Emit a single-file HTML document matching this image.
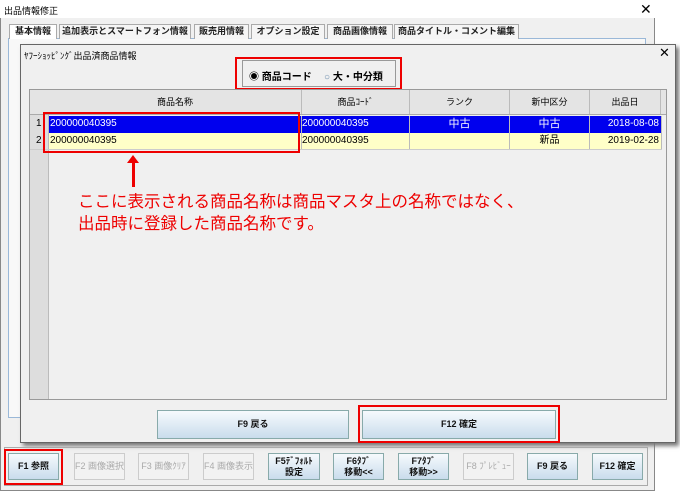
<!DOCTYPE html>
<html><head><meta charset="utf-8"><style>
*{box-sizing:border-box;margin:0;padding:0}
body{width:680px;height:492px;background:#fff;position:relative;overflow:hidden;font-family:"Liberation Sans","Noto Sans CJK JP",sans-serif;font-size:10px;color:#000}
.a{position:absolute}
.win{left:0;top:0;width:655px;height:491px;background:#f0f0f0;border:1px solid #888}
.tb{left:0;top:0;width:655px;height:18px;background:#fff}
.tab{top:24px;height:15px;border:1px solid #aaa;border-bottom:none;background:#f5f5f5;font-size:9px;line-height:13px;text-align:center;font-weight:bold;color:#222;white-space:nowrap;overflow:hidden}
.panel{left:8px;top:38px;width:638px;height:380px;border:1px solid #9ab8d8;background:#f8f8f8}
.dlg{left:20px;top:44px;width:656px;height:399px;background:#f0f0f0;border:1px solid #666;box-shadow:3px 3px 4px #777}
.btn{background:linear-gradient(#f6fafd,#c9dcec);border:1px solid #8aa;font-size:9px;font-weight:bold;text-align:center;color:#111;white-space:nowrap}
.dis{background:#f2f2f2;border:1px solid #ccc;color:#aaa;font-weight:normal}
.red{border:2px solid #e00}
.cell{position:absolute;height:100%;border-right:1px solid #bbb;line-height:16px;font-size:10px}
</style></head><body>
<div class="a win"></div>
<div class="a tb"></div>
<div class="a" style="left:4px;top:4px;font-size:9px">出品情報修正</div>
<div class="a" style="left:640px;top:1px;font-size:14px">✕</div>
<div class="a panel"></div>
<div class="a tab" style="left:9px;width:48px;background:#fff">基本情報</div>
<div class="a tab" style="left:59px;width:132px">追加表示とスマートフォン情報</div>
<div class="a tab" style="left:194px;width:55px">販売用情報</div>
<div class="a tab" style="left:251px;width:74px">オプション設定</div>
<div class="a tab" style="left:327px;width:66px">商品画像情報</div>
<div class="a tab" style="left:394px;width:125px">商品タイトル・コメント編集</div>

<div class="a dlg"></div>
<div class="a" style="left:24px;top:49px;font-size:9px">ﾔﾌｰｼｮｯﾋﾟﾝｸﾞ出品済商品情報</div>
<div class="a" style="left:659px;top:45px;font-size:13px">✕</div>
<div class="a" style="left:242px;top:60px;width:154px;height:27px;border:1px solid #999;background:#f0f0f0"></div>
<div class="a" style="left:249px;top:68px;font-size:10px;font-weight:bold">◉ 商品コード</div>
<div class="a" style="left:324px;top:68px;font-size:10px;font-weight:bold"><span style="color:#68a">○</span> 大・中分類</div>
<div class="a red" style="left:235px;top:57px;width:167px;height:33px"></div>

<div class="a" style="left:29px;top:89px;width:638px;height:311px;border:1px solid #999;background:#f0f0f0"></div>
<div class="a" style="left:30px;top:90px;width:19px;height:309px;background:#ddd;border-right:1px solid #bbb"></div>
<div class="a" style="left:30px;top:90px;width:636px;height:25px;background:#e4e4e4;border-bottom:1px solid #aaa">
<div class="cell" style="left:19px;width:253px;text-align:center;line-height:25px;font-size:9px">商品名称</div>
<div class="cell" style="left:272px;width:108px;text-align:center;line-height:25px;font-size:9px">商品ｺｰﾄﾞ</div>
<div class="cell" style="left:380px;width:100px;text-align:center;line-height:25px;font-size:9px">ランク</div>
<div class="cell" style="left:480px;width:80px;text-align:center;line-height:25px;font-size:9px">新中区分</div>
<div class="cell" style="left:560px;width:71px;text-align:center;line-height:25px;font-size:9px">出品日</div>
</div>
<div class="a" style="left:30px;top:116px;width:632px;height:17px;background:#0000ee;color:#fff">
<div class="cell" style="left:0;width:19px;background:#ddd;color:#000;padding-left:6px">1</div>
<div class="cell" style="left:19px;width:253px;padding-left:1px">200000040395</div>
<div class="cell" style="left:272px;width:108px">200000040395</div>
<div class="cell" style="left:380px;width:100px;text-align:center;font-size:11px">中古</div>
<div class="cell" style="left:480px;width:80px;text-align:center;font-size:11px">中古</div>
<div class="cell" style="left:560px;width:72px;text-align:right;padding-right:2px">2018-08-08</div>
</div>
<div class="a" style="left:30px;top:133px;width:632px;height:17px;background:#ffffc8;border-bottom:1px solid #ccc">
<div class="cell" style="left:0;width:19px;background:#ddd;padding-left:6px">2</div>
<div class="cell" style="left:19px;width:253px;padding-left:1px">200000040395</div>
<div class="cell" style="left:272px;width:108px">200000040395</div>
<div class="cell" style="left:380px;width:100px"></div>
<div class="cell" style="left:480px;width:80px;text-align:center">新品</div>
<div class="cell" style="left:560px;width:72px;text-align:right;padding-right:2px">2019-02-28</div>
</div>
<div class="a red" style="left:43px;top:112px;width:257px;height:41px"></div>
<div class="a" style="left:132px;top:160px;width:3px;height:27px;background:#e00"></div>
<div class="a" style="left:127px;top:155px;width:0;height:0;border-left:6px solid transparent;border-right:6px solid transparent;border-bottom:8px solid #e00"></div>
<div class="a" style="left:78px;top:191px;color:#e00;font-size:16.5px;line-height:22px">ここに表示される商品名称は商品マスタ上の名称ではなく、<br>出品時に登録した商品名称です。</div>

<div class="a btn" style="left:157px;top:410px;width:192px;height:29px;line-height:27px">F9 戻る</div>
<div class="a btn" style="left:362px;top:410px;width:194px;height:29px;line-height:27px">F12 確定</div>
<div class="a red" style="left:358px;top:405px;width:202px;height:38px"></div>

<div class="a" style="left:4px;top:447px;width:644px;height:39px;border:1px solid #aaa"></div>
<div class="a btn" style="left:8px;top:453px;width:51px;height:27px;line-height:25px">F1 参照</div>
<div class="a btn dis" style="left:74px;top:453px;width:51px;height:27px;line-height:25px">F2 画像選択</div>
<div class="a btn dis" style="left:138px;top:453px;width:51px;height:27px;line-height:25px">F3 画像ｸﾘｱ</div>
<div class="a btn dis" style="left:203px;top:453px;width:51px;height:27px;line-height:25px">F4 画像表示</div>
<div class="a btn" style="left:268px;top:453px;width:52px;height:27px;line-height:11px;padding-top:2px">F5ﾃﾞﾌｫﾙﾄ<br>設定</div>
<div class="a btn" style="left:333px;top:453px;width:51px;height:27px;line-height:11px;padding-top:2px">F6ﾀﾌﾞ<br>移動&lt;&lt;</div>
<div class="a btn" style="left:398px;top:453px;width:51px;height:27px;line-height:11px;padding-top:2px">F7ﾀﾌﾞ<br>移動&gt;&gt;</div>
<div class="a btn dis" style="left:463px;top:453px;width:51px;height:27px;line-height:25px">F8 ﾌﾟﾚﾋﾞｭｰ</div>
<div class="a btn" style="left:527px;top:453px;width:51px;height:27px;line-height:25px">F9 戻る</div>
<div class="a btn" style="left:592px;top:453px;width:51px;height:27px;line-height:25px">F12 確定</div>
<div class="a red" style="left:4px;top:449px;width:59px;height:36px"></div>
</body></html>
